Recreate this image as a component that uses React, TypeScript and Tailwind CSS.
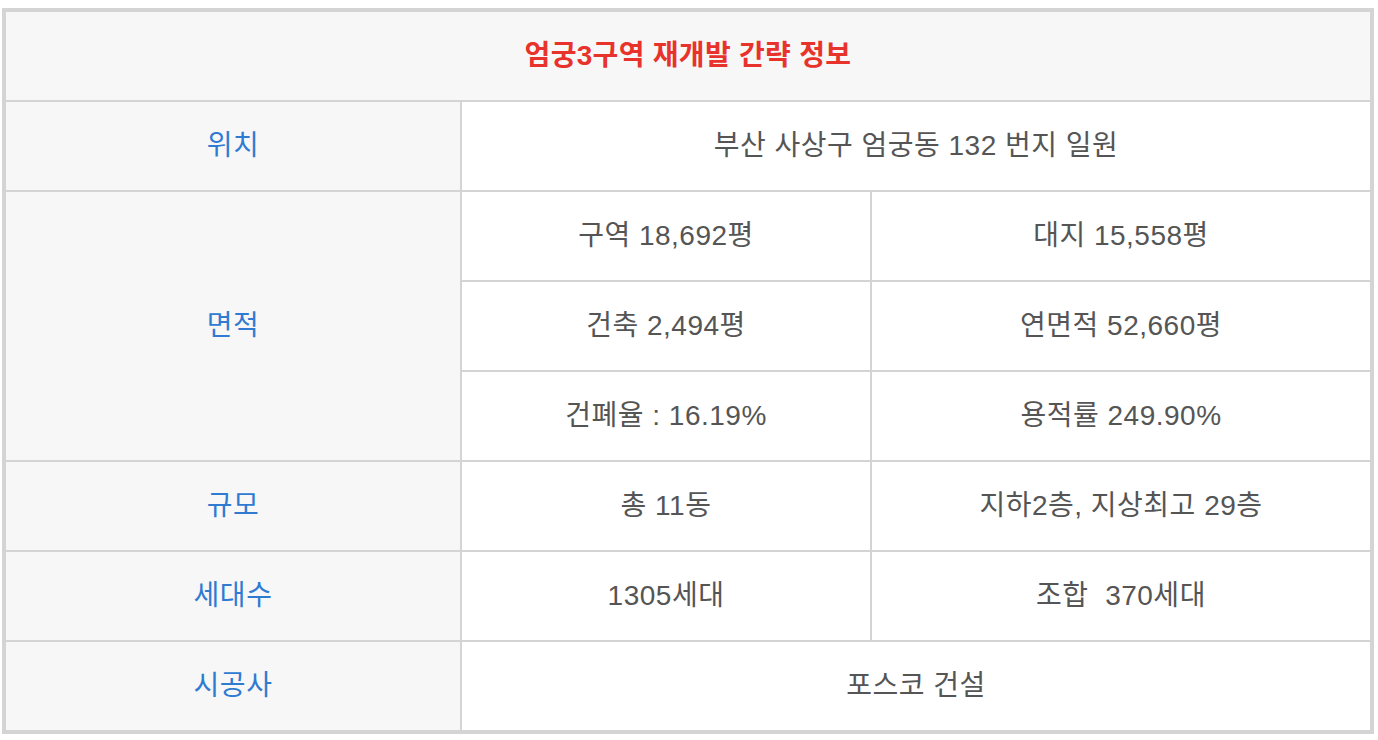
const font = { fontFamily: '"Liberation Sans", "Noto Sans CJK KR", sans-serif' };

function Label({ children, rows = 1 }: { children: React.ReactNode; rows?: number }) {
  return (
    <div
      className={`flex items-center justify-center bg-[#f7f7f7] text-[#2f7bd2] ${rows === 3 ? "row-span-3" : ""}`}
    >
      {children}
    </div>
  );
}

function Cell({ children, span = 1 }: { children: React.ReactNode; span?: number }) {
  return (
    <div
      className={`flex items-center justify-center whitespace-pre bg-white text-[#555555] ${span === 2 ? "col-span-2" : ""}`}
    >
      {children}
    </div>
  );
}

export default function App() {
  return (
    <div className="min-h-screen bg-white pt-[8px] pl-[2px]" style={font}>
      <div className="w-[1372px] bg-[#d4d4d4] p-[4px]">
        <div className="grid grid-cols-[454px_408px_498px] auto-rows-[88px] gap-[2px] text-[28px] leading-none tracking-[0.5px]">
          <div className="col-span-3 flex items-center justify-center bg-[#f7f7f7] font-bold text-[#e8332c] tracking-[0.3px]">
            엄궁3구역 재개발 간략 정보
          </div>

          <Label>위치</Label>
          <Cell span={2}>부산 사상구 엄궁동 132 번지 일원</Cell>

          <Label rows={3}>면적</Label>
          <Cell>구역 18,692평</Cell>
          <Cell>대지 15,558평</Cell>
          <Cell>건축 2,494평</Cell>
          <Cell>연면적 52,660평</Cell>
          <Cell>건폐율 : 16.19%</Cell>
          <Cell>용적률 249.90%</Cell>

          <Label>규모</Label>
          <Cell>총 11동</Cell>
          <Cell>지하2층, 지상최고 29층</Cell>

          <Label>세대수</Label>
          <Cell>1305세대</Cell>
          <Cell>조합  370세대</Cell>

          <Label>시공사</Label>
          <Cell span={2}>포스코 건설</Cell>
        </div>
      </div>
    </div>
  );
}
